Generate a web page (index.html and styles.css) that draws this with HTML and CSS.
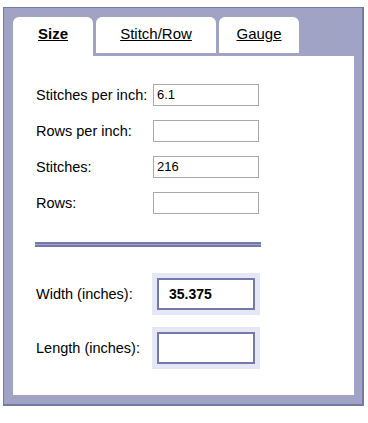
FILE: index.html
```html
<!DOCTYPE html>
<html>
<head>
<meta charset="utf-8">
<link rel="stylesheet" href="styles.css">
</head>
<body>
<div class="frame">
  <div class="tabs">
    <a class="tab tab-active tab-small">Size</a>
    <a class="tab tab-wide">Stitch/Row</a>
    <a class="tab tab-small">Gauge</a>
  </div>
  <div class="panel">
    <div class="fields">
      <div class="row"><span class="label">Stitches per inch:</span><span class="input">6.1</span></div>
      <div class="row"><span class="label">Rows per inch:</span><span class="input"></span></div>
      <div class="row"><span class="label">Stitches:</span><span class="input">216</span></div>
      <div class="row"><span class="label">Rows:</span><span class="input"></span></div>
    </div>
    <div class="sep"></div>
    <div class="results">
      <div class="row"><span class="label">Width (inches):</span><span class="result"><span class="result-inner">35.375</span></span></div>
      <div class="row"><span class="label">Length (inches):</span><span class="result"><span class="result-inner"></span></span></div>
    </div>
  </div>
</div>
</body>
</html>
```

FILE: styles.css
```css
html, body {
  margin: 0;
  padding: 0;
  background: #ffffff;
}

body {
  font-family: "Liberation Sans", Arial, sans-serif;
  color: #000;
}

.frame {
  margin: 7px 0 0 3px;
  width: 341px;
  background: #a0a3c4;
  border-style: solid;
  border-color: #7579a9;
  border-width: 1px 2px 2px 1px;
  padding: 9px 8px 9px 9px;
}

.tabs {
  display: flex;
  align-items: flex-start;
  gap: 3px;
  height: 39px;
}

.tab {
  display: block;
  box-sizing: border-box;
  height: 36px;
  background: #fff;
  border-radius: 6px 6px 0 0;
  text-align: center;
  font-size: 15px;
  line-height: 18px;
  padding-top: 8px;
  text-decoration: underline;
  color: #000;
}

.tab-small { width: 80px; }
.tab-wide { width: 120px; }

.tab-active {
  height: 39px;
  font-weight: bold;
}

.panel {
  background: #fff;
  height: 339px;
  box-sizing: border-box;
  padding: 28px 0 0 22px;
}

.fields {
  display: flex;
  flex-direction: column;
  gap: 14px;
}

.row {
  display: flex;
  align-items: center;
}

.label {
  width: 118px;
  padding-left: 1px;
  box-sizing: border-box;
  font-size: 14.5px;
  white-space: nowrap;
}

.input {
  box-sizing: border-box;
  width: 106px;
  height: 22px;
  border: 1px solid #a9a9ad;
  background: #fff;
  font-size: 13px;
  line-height: 20px;
  padding-left: 3px;
}

.sep {
  margin-top: 28px;
  width: 226px;
  height: 1px;
  background: #a0a3c4;
  border-top: 2px solid #7579a9;
  border-bottom: 2px solid #7579a9;
}

.results {
  margin-top: 26px;
  display: flex;
  flex-direction: column;
  gap: 12px;
}

.results .label {
  width: 117px;
}

.result {
  display: block;
  background: #e6e7f6;
  padding: 5px;
}

.result-inner {
  display: block;
  box-sizing: border-box;
  width: 98px;
  height: 32px;
  border: 2px solid #7579a9;
  background: #fff;
  font-size: 14px;
  font-weight: bold;
  line-height: 28px;
  padding-left: 10px;
}
```
